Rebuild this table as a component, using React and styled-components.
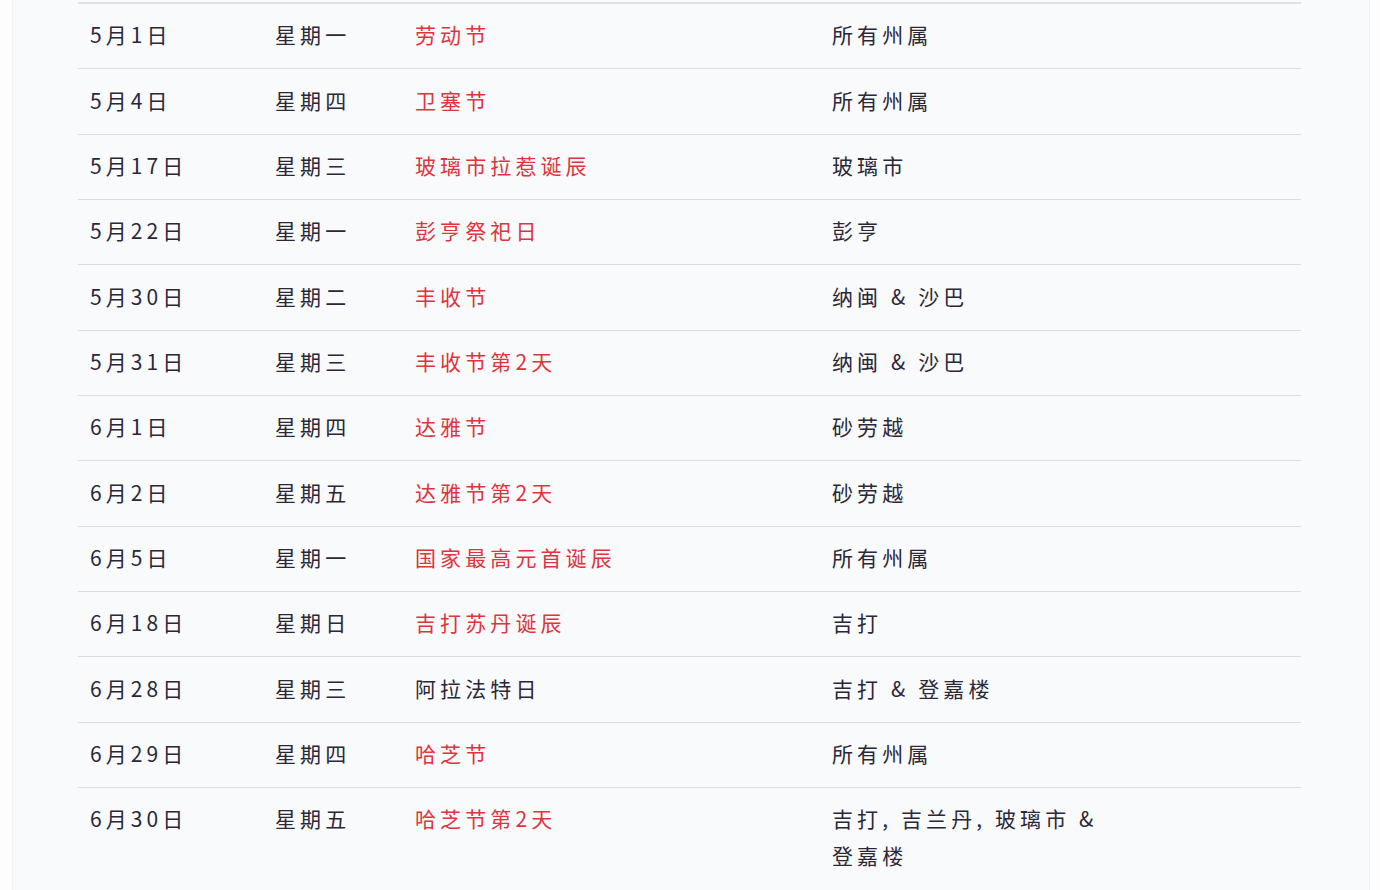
import React from "react";
import styled, { createGlobalStyle } from "styled-components";

const GlobalStyle = createGlobalStyle`
  html, body {
    margin: 0;
    padding: 0;
    background: #fdfdfe;
  }
  body {
    font-family: "Noto Sans CJK SC", "Noto Sans", sans-serif;
    overflow: hidden;
  }
`;

const Panel = styled.div`
  box-sizing: border-box;
  width: 1358px;
  height: 890px;
  margin: 0 0 0 12px;
  padding: 2px 0 0 65px;
  background: #f9fafc;
  border-left: 1px solid #f2f3f5;
  border-right: 1px solid #eef2ea;
  overflow: hidden;
`;

const Table = styled.div`
  width: 1223px;
  border-top: 2px solid #dfe1e4;
`;

const Row = styled.div`
  display: grid;
  grid-template-columns: 185px 140px 417px 275px 1fr;
  box-sizing: border-box;
  padding: 12.4px 0 14.94px 12px;
  border-bottom: ${({ $last }) => ($last ? "none" : "1px solid #d9dce0")};
  font-size: 21px;
  line-height: 37px;
  letter-spacing: 4.1px;
  color: #2a2838;
`;

const Cell = styled.div`
  color: ${({ $red }) => ($red ? "#e0333d" : "#2a2838")};
  white-space: ${({ $wrap }) => ($wrap ? "normal" : "nowrap")};
`;

const rows = [
  ["5月1日", "星期一", "劳动节", true, "所有州属"],
  ["5月4日", "星期四", "卫塞节", true, "所有州属"],
  ["5月17日", "星期三", "玻璃市拉惹诞辰", true, "玻璃市"],
  ["5月22日", "星期一", "彭亨祭祀日", true, "彭亨"],
  ["5月30日", "星期二", "丰收节", true, "纳闽 & 沙巴"],
  ["5月31日", "星期三", "丰收节第2天", true, "纳闽 & 沙巴"],
  ["6月1日", "星期四", "达雅节", true, "砂劳越"],
  ["6月2日", "星期五", "达雅节第2天", true, "砂劳越"],
  ["6月5日", "星期一", "国家最高元首诞辰", true, "所有州属"],
  ["6月18日", "星期日", "吉打苏丹诞辰", true, "吉打"],
  ["6月28日", "星期三", "阿拉法特日", false, "吉打 & 登嘉楼"],
  ["6月29日", "星期四", "哈芝节", true, "所有州属"],
  ["6月30日", "星期五", "哈芝节第2天", true, "吉打, 吉兰丹, 玻璃市\u00a0& 登嘉楼"],
];

export default function App() {
  return (
    <>
      <GlobalStyle />
      <Panel>
        <Table>
          {rows.map(([date, day, name, red, state], i) => (
            <Row key={date} $last={i === rows.length - 1}>
              <Cell>{date}</Cell>
              <Cell>{day}</Cell>
              <Cell $red={red}>{name}</Cell>
              <Cell $wrap>{state}</Cell>
              <Cell />
            </Row>
          ))}
        </Table>
      </Panel>
    </>
  );
}
